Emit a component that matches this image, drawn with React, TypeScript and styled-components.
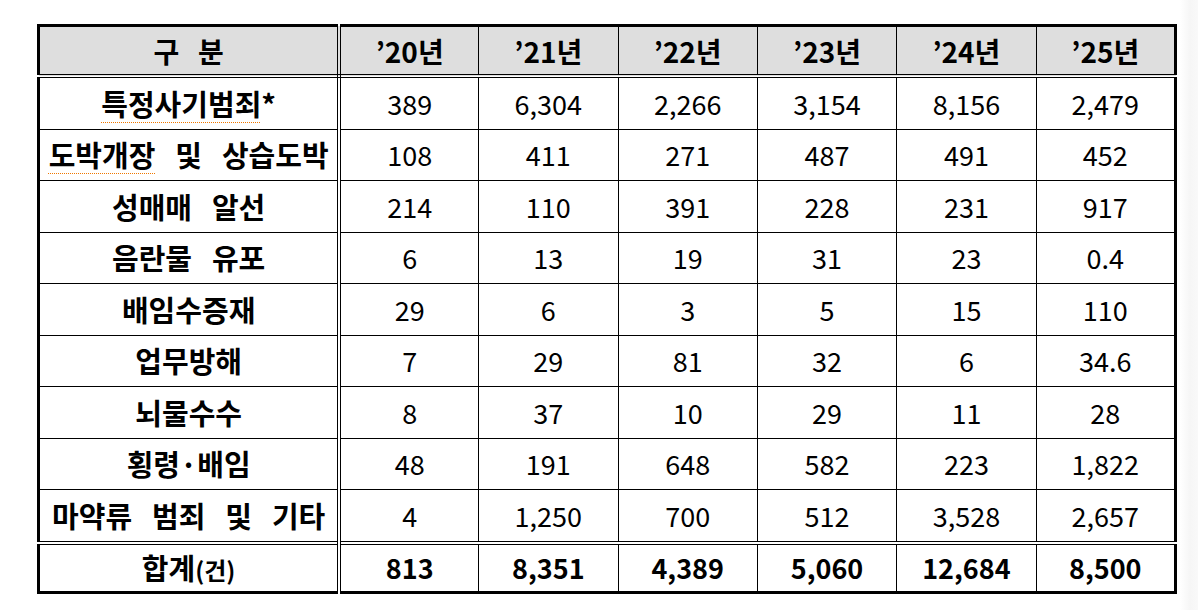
import React from 'react';
import styled, { createGlobalStyle } from 'styled-components';

const GlobalStyle = createGlobalStyle`
  html, body {
    margin: 0;
    padding: 0;
    background: #ffffff;
  }
  body {
    font-family: "Noto Sans CJK KR", "Noto Sans", sans-serif;
    color: #000;
  }
`;

const Page = styled.div`
  width: 1198px;
  height: 610px;
  box-sizing: border-box;
  padding: 24px 0 0 37px;
  background: linear-gradient(to right, #ffffff 0, #ffffff 1180px, #f6f6f6 1190px, #f9f9f9 1198px);
`;

const Table = styled.table`
  border-collapse: collapse;
  table-layout: fixed;
  width: 1140px;
  border: 3px solid #000;
`;

const HeadCell = styled.th<{ $first?: boolean }>`
  height: 47px;
  padding: 0;
  background: #dedede;
  border: 1px solid #000;
  border-bottom: 4px double #000;
  border-right: ${(p) => (p.$first ? '4px double #000' : '1px solid #000')};
  font-size: 28px;
  font-weight: 700;
  text-align: center;
  vertical-align: middle;
  line-height: 1;
  word-spacing: 0.45em;
`;

const LabelCell = styled.td<{ $total?: boolean }>`
  height: ${(p) => (p.$total ? '46px' : '50.5px')};
  padding: 0;
  border: 1px solid #000;
  border-right: 4px double #000;
  border-top: ${(p) => (p.$total ? '4px double #000' : '1px solid #000')};
  font-size: 29px;
  font-weight: 700;
  text-align: center;
  vertical-align: middle;
  line-height: 1;
  white-space: nowrap;
  word-spacing: 0.46em;
`;

const ValueCell = styled.td<{ $total?: boolean }>`
  padding: 0;
  border: 1px solid #000;
  border-top: ${(p) => (p.$total ? '4px double #000' : '1px solid #000')};
  font-size: 27px;
  font-weight: ${(p) => (p.$total ? 700 : 400)};
  text-align: center;
  vertical-align: middle;
  line-height: 1;
`;

const Spell = styled.span`
  text-decoration: underline dotted #f07800;
  text-decoration-thickness: 1px;
  text-underline-offset: 6px;
`;

const Small = styled.span`
  font-size: 24px;
  word-spacing: 0;
`;

const years = ['\u201920년', '\u201921년', '\u201922년', '\u201923년', '\u201924년', '\u201925년'];

const rows: { label: React.ReactNode; values: string[] }[] = [
  { label: <><Spell>특정사기범죄</Spell>*</>, values: ['389', '6,304', '2,266', '3,154', '8,156', '2,479'] },
  { label: <><Spell>도박개장</Spell> 및 상습도박</>, values: ['108', '411', '271', '487', '491', '452'] },
  { label: '성매매 알선', values: ['214', '110', '391', '228', '231', '917'] },
  { label: '음란물 유포', values: ['6', '13', '19', '31', '23', '0.4'] },
  { label: '배임수증재', values: ['29', '6', '3', '5', '15', '110'] },
  { label: '업무방해', values: ['7', '29', '81', '32', '6', '34.6'] },
  { label: '뇌물수수', values: ['8', '37', '10', '29', '11', '28'] },
  { label: '횡령·배임', values: ['48', '191', '648', '582', '223', '1,822'] },
  { label: '마약류 범죄 및 기타', values: ['4', '1,250', '700', '512', '3,528', '2,657'] },
];

const totals = ['813', '8,351', '4,389', '5,060', '12,684', '8,500'];

export default function App() {
  return (
    <>
      <GlobalStyle />
      <Page>
        <Table>
          <colgroup>
            <col style={{ width: 300 }} />
            {years.map((y) => (
              <col key={y} style={{ width: 139 }} />
            ))}
          </colgroup>
          <thead>
            <tr>
              <HeadCell $first>구 분</HeadCell>
              {years.map((y) => (
                <HeadCell key={y}>{y}</HeadCell>
              ))}
            </tr>
          </thead>
          <tbody>
            {rows.map((r, i) => (
              <tr key={i}>
                <LabelCell>{r.label}</LabelCell>
                {r.values.map((v, j) => (
                  <ValueCell key={j}>{v}</ValueCell>
                ))}
              </tr>
            ))}
            <tr>
              <LabelCell $total>
                합계<Small>(건)</Small>
              </LabelCell>
              {totals.map((v, j) => (
                <ValueCell key={j} $total>
                  {v}
                </ValueCell>
              ))}
            </tr>
          </tbody>
        </Table>
      </Page>
    </>
  );
}
